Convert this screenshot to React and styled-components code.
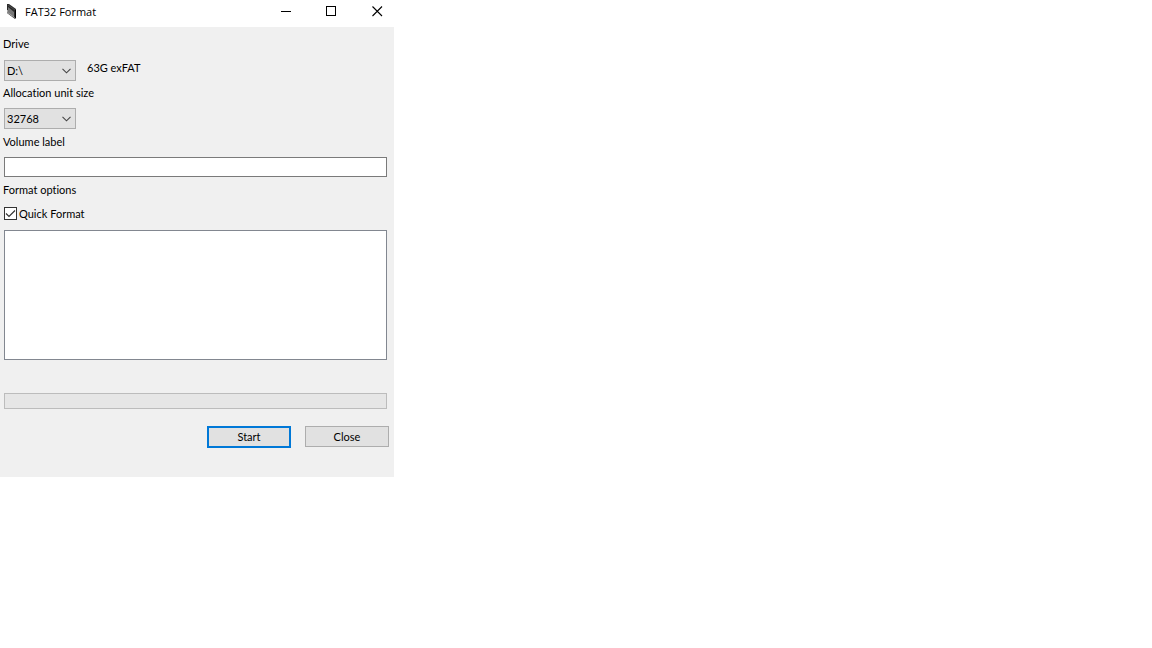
import React, { useState } from "react";
import styled, { createGlobalStyle } from "styled-components";

const DRIVES = [{ id: 1, name: "D:\\", info: "63G exFAT" }];

const UNIT_SIZES = ["32768", "16384", "8192", "4096"];

function App() {
  const [drive, setDrive] = useState(DRIVES[0].name);
  const [unitSize, setUnitSize] = useState(UNIT_SIZES[0]);
  const [label, setLabel] = useState("");
  const [quick, setQuick] = useState(true);

  const selected = DRIVES.find(item => item.name === drive);

  return (
    <>
      <GlobalStyle />
      <Window>
        <TitleBar>
          <DriveIcon />
          <Title>FAT32 Format</Title>
          <Captions>
            <Caption aria-label="Minimize">
              <svg width="11" height="11" viewBox="0 0 11 11">
                <path d="M1 5.5h10" stroke="#000" />
              </svg>
            </Caption>
            <Caption aria-label="Maximize">
              <svg width="11" height="11" viewBox="0 0 11 11">
                <rect x="0.5" y="0.5" width="9" height="9" fill="none" stroke="#000" />
              </svg>
            </Caption>
            <Caption aria-label="Close window">
              <svg width="11" height="11" viewBox="0 0 11 11">
                <path d="M0.5 0.5l9.5 9.5M10 0.5l-9.5 9.5" stroke="#000" strokeWidth="1.1" />
              </svg>
            </Caption>
          </Captions>
        </TitleBar>
        <Body>
          <Label htmlFor="drive">Drive</Label>
          <DriveRow>
            <Dropdown id="drive" value={drive} onChange={setDrive}>
              {DRIVES.map(item => (
                <option key={item.id}>{item.name}</option>
              ))}
            </Dropdown>
            <span>{selected.info}</span>
          </DriveRow>
          <Label htmlFor="unit">Allocation unit size</Label>
          <Field>
            <Dropdown id="unit" value={unitSize} onChange={setUnitSize}>
              {UNIT_SIZES.map(size => (
                <option key={size}>{size}</option>
              ))}
            </Dropdown>
          </Field>
          <Label htmlFor="volume">Volume label</Label>
          <Field>
            <TextInput
              id="volume"
              type="text"
              value={label}
              onChange={e => setLabel(e.target.value)}
            />
          </Field>
          <Text>Format options</Text>
          <CheckRow>
            <CheckHolder>
              <CheckBox
                type="checkbox"
                checked={quick}
                onChange={e => setQuick(e.target.checked)}
              />
              {quick && (
                <Overlay width="13" height="13" viewBox="0 0 13 13">
                  <path d="M2 6.5l3 3 6-6" fill="none" stroke="#333" strokeWidth="1.2" />
                </Overlay>
              )}
            </CheckHolder>
            Quick Format
          </CheckRow>
          <Log readOnly aria-label="Output" />
          <Progress role="progressbar" aria-label="Progress" aria-valuenow={0} />
          <Actions>
            <Button $primary>Start</Button>
            <Button>Close</Button>
          </Actions>
        </Body>
      </Window>
    </>
  );
}

function Dropdown({ id, value, onChange, children }) {
  return (
    <SelectHolder>
      <Select id={id} value={value} onChange={e => onChange(e.target.value)}>
        {children}
      </Select>
      <Chevron width="9" height="6" viewBox="0 0 9 6">
        <path d="M0.5 0.8l4 4 4-4" fill="none" stroke="#444" strokeWidth="1.1" />
      </Chevron>
    </SelectHolder>
  );
}

function DriveIcon() {
  return (
    <svg width="16" height="16" viewBox="0 0 16 16" aria-hidden="true">
      <path d="M3 0h2l7 5v9l-1 1-8-6z" fill="#2a2a2a" />
      <path d="M4 3l6 5v5l-6-4z" fill="#777" />
      <path d="M4 1l7 5" stroke="#4a4a4a" />
      <path d="M3.5 6v2.5l7 5" fill="none" stroke="#a8a8a8" />
      <path d="M11.5 6v8" stroke="#000" />
    </svg>
  );
}

export default App;

const GlobalStyle = createGlobalStyle`
  * {
    box-sizing: border-box;
  }
  body {
    margin: 0;
    background: #fff;
    color: #000;
    font-family: Lato, sans-serif;
    font-size: 11px;
    line-height: 16px;
    font-variant-ligatures: none;
  }
`;

const Window = styled.main`
  width: 100%;
  max-width: 394px;
`;

const TitleBar = styled.header`
  display: flex;
  align-items: center;
  height: 27px;
  padding: 0 0 4px 4px;
`;

const Title = styled.h1`
  flex: 1;
  margin: 0 0 0 5px;
  font-family: "Open Sans", sans-serif;
  font-size: 11px;
  font-weight: normal;
`;

const Captions = styled.div`
  display: flex;
  gap: 12px;
`;

const Caption = styled.button`
  display: flex;
  justify-content: center;
  align-items: center;
  width: 34px;
  height: 23px;
  padding: 0;
  border: none;
  background: transparent;
`;

const Body = styled.form`
  display: flex;
  flex-direction: column;
  padding: 9px 7px 29px 4px;
  background: #f0f0f0;
`;

const Label = styled.label`
  align-self: flex-start;
  margin-left: -1px;
`;

const Text = styled.div`
  margin-left: -1px;
`;

const Field = styled.div`
  display: flex;
  margin: 7px 0 5px;
`;

const DriveRow = styled.div`
  display: flex;
  align-items: flex-start;
  gap: 11px;
  margin: 8px 0 4px;
`;

const SelectHolder = styled.div`
  position: relative;
  display: flex;
`;

const Select = styled.select`
  appearance: none;
  width: 72px;
  height: 21px;
  padding: 0 16px 0 2px;
  border: 1px solid #adadad;
  border-radius: 0;
  background: #e1e1e1;
  color: #000;
  font: inherit;
`;

const Chevron = styled.svg`
  position: absolute;
  top: 8px;
  right: 5px;
  pointer-events: none;
`;

const TextInput = styled.input`
  width: 100%;
  height: 20px;
  padding: 0 3px;
  border: 1px solid #7a7a7a;
  background: #fff;
  font: inherit;
`;

const CheckRow = styled.label`
  display: flex;
  align-items: flex-start;
  align-self: flex-start;
  gap: 2px;
  margin: 8px 0;
`;

const CheckHolder = styled.span`
  position: relative;
  display: flex;
  margin-top: 1px;
`;

const CheckBox = styled.input`
  appearance: none;
  width: 13px;
  height: 13px;
  margin: 0;
  border: 1px solid #333;
  background: #fff;
`;

const Overlay = styled.svg`
  position: absolute;
  top: 0;
  left: 0;
  pointer-events: none;
`;

const Log = styled.textarea`
  width: 100%;
  height: 130px;
  border: 1px solid #828790;
  background: #fff;
  font: inherit;
  resize: none;
`;

const Progress = styled.div`
  height: 16px;
  margin-top: 33px;
  border: 1px solid #bcbcbc;
  background: #e6e6e6;
`;

const Actions = styled.div`
  display: flex;
  justify-content: flex-end;
  gap: 14px;
  margin: 17px -2px 0 0;
`;

const Button = styled.button.attrs({ type: "button" })`
  width: 84px;
  height: ${({ $primary }) => ($primary ? "22px" : "21px")};
  padding: 0;
  border: ${({ $primary }) => ($primary ? "2px solid #0078d7" : "1px solid #adadad")};
  background: #e1e1e1;
  color: #000;
  font: inherit;
`;
